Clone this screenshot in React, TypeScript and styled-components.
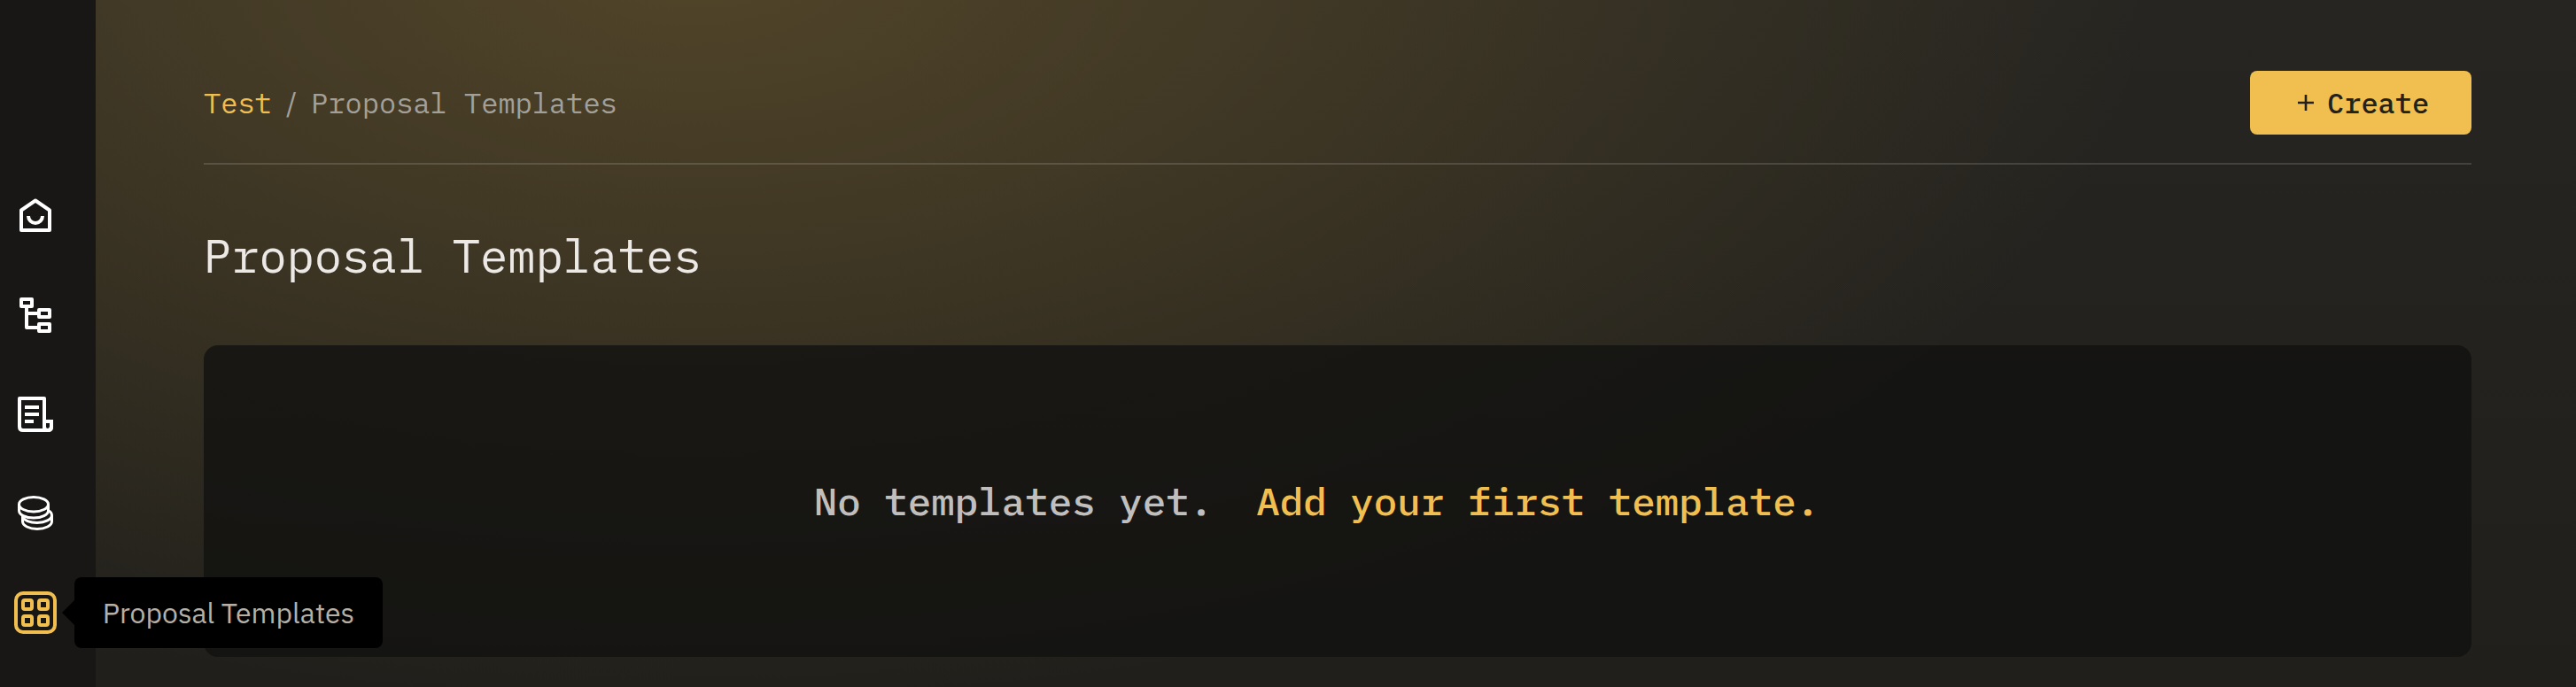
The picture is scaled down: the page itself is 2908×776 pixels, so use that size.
import React from 'react';
import styled, { createGlobalStyle } from 'styled-components';

const mono = '"IBM Plex Mono", "Liberation Mono", monospace';
const sans = '"IBM Plex Sans", Roboto, sans-serif';
const amber = '#f1bf50';

const GlobalStyle = createGlobalStyle`
  * { box-sizing: border-box; }
  body { margin: 0; background: #252420; }
`;

const Page = styled.div`
  display: flex;
  height: 776px;
  overflow: hidden;
  font-family: ${mono};
  background:
    radial-gradient(ellipse 1660px 840px at 780px -40px, rgba(241, 186, 70, 0.21) 0%, rgba(241, 186, 70, 0.137) 38%, rgba(241, 186, 70, 0.07) 68%, rgba(241, 186, 70, 0) 100%),
    linear-gradient(#262521, #201f1b);
`;

const Sidebar = styled.nav`
  width: 108px;
  flex: none;
  padding: 216px 0 0 14px;
  display: flex;
  flex-direction: column;
  gap: 60px;
  background: #181715;
`;

const NavItem = styled.a<{ $active?: boolean }>`
  position: relative;
  display: flex;
  width: 52px;
  height: 52px;
  color: ${(p) => (p.$active ? amber : '#ffffff')};
`;

const Icon = styled.svg<{ $weight?: number }>`
  width: 52px;
  height: 52px;
  fill: none;
  stroke: currentColor;
  stroke-width: ${(p) => p.$weight ?? 4};
`;

const Tooltip = styled.span`
  position: absolute;
  z-index: 2;
  left: 70px;
  top: -12px;
  width: 348px;
  height: 80px;
  display: flex;
  align-items: center;
  justify-content: center;
  border-radius: 8px;
  background: #000;
  color: #b5afa6;
  font: 400 32px/1 ${sans};
  white-space: nowrap;

  &::before {
    content: '';
    position: absolute;
    left: -14px;
    top: 26px;
    border: solid transparent;
    border-width: 14px 14px 14px 0;
    border-right-color: #000;
  }
`;

const Main = styled.main`
  flex: 1;
  padding: 48px 118px 0 122px;
`;

const Header = styled.header`
  display: flex;
  align-items: center;
  justify-content: space-between;
  height: 138px;
  border-bottom: 2px solid rgba(255, 255, 255, 0.14);
`;

const Breadcrumb = styled.div`
  display: flex;
  align-items: center;
  font-size: 32px;
  line-height: 40px;
  color: #a3a09a;
`;

const Crumb = styled.a`
  color: ${amber};
`;

const Slash = styled.span`
  width: 44.4px;
  text-align: center;
  font-family: ${sans};
`;

const CreateButton = styled.button`
  display: flex;
  align-items: center;
  gap: 15px;
  width: 250px;
  height: 72px;
  padding: 0 0 0 54px;
  border: 0;
  border-radius: 8px;
  background: ${amber};
  color: #22211d;
  font: 500 32px/40px ${mono};
`;

const PlusIcon = styled.svg`
  width: 18px;
  height: 18px;
  stroke: currentColor;
  stroke-width: 2.6;
`;

const Title = styled.h1`
  margin: 72px 0 70px;
  font-size: 52px;
  line-height: 62px;
  font-weight: 400;
  color: #ebe8e6;
`;

const EmptyCard = styled.section`
  display: flex;
  align-items: center;
  justify-content: center;
  height: 352px;
  padding-right: 47px;
  border-radius: 16px;
  background: rgba(17, 17, 16, 0.8);
  font-size: 44.16px;
  font-weight: 500;
  line-height: 56px;
  color: #c0bfbd;
  gap: 49px;
`;

const HomeIcon = () => (
  <Icon viewBox="0 0 52 52" strokeLinejoin="round">
    <path d="M10 44V21.500L26 10.500 42 21.500V44Z" />
    <path d="M18 28a8 8 0 0 0 16 0" />
  </Icon>
);

const TreeIcon = () => (
  <Icon viewBox="0 0 52 52" strokeLinejoin="round">
    <path d="M10 10h12v8H10zM30 22h12v8H30zM30 38h12v8H30zM16 18v24h14M16 26h14" />
  </Icon>
);

const InvoiceIcon = () => (
  <Icon viewBox="0 0 52 52" strokeLinejoin="round">
    <path d="M36 44V10H8v32q0 4 4 4h28q4 0 4-4" />
    <path d="M14 20h16M14 28h16M14 36h10" />
    <path strokeLinejoin="miter" d="M36 36h8v6q0 4-4 4t-4-4z" />
  </Icon>
);

const CoinsIcon = () => (
  <Icon viewBox="0 0 52 52" $weight={3}>
    <ellipse cx="24" cy="17.700" rx="16.500" ry="8.200" />
    <path d="M7.500 17.700v7c0 4.600 7.300 8.300 16.500 8.300s16.500-3.700 16.500-8.300v-7" />
    <path d="M12 32.500c2 3.500 8 5.900 16 5.900 9.100 0 16.500-3.700 16.500-8.400 0-2.200-1.500-4-4-5.500" />
    <path d="M11.500 30.500v6.500c0 4.700 7.400 8.500 16.500 8.500s16.500-3.800 16.500-8.500v-7" />
  </Icon>
);

const GridIcon = () => (
  <Icon viewBox="0 0 52 52">
    <rect x="4" y="6" width="44" height="44" rx="8" />
    <rect x="12" y="14" width="10" height="10" rx="2" />
    <rect x="30" y="14" width="10" height="10" rx="2" />
    <rect x="12" y="32" width="10" height="10" rx="2" />
    <rect x="30" y="32" width="10" height="10" rx="2" />
  </Icon>
);

export default function App() {
  return (
    <>
      <GlobalStyle />
      <Page>
        <Sidebar>
          <NavItem><HomeIcon /></NavItem>
          <NavItem><TreeIcon /></NavItem>
          <NavItem><InvoiceIcon /></NavItem>
          <NavItem><CoinsIcon /></NavItem>
          <NavItem $active>
            <GridIcon />
            <Tooltip>Proposal Templates</Tooltip>
          </NavItem>
        </Sidebar>
        <Main>
          <Header>
            <Breadcrumb>
              <Crumb>Test</Crumb>
              <Slash>/</Slash>
              <span>Proposal Templates</span>
            </Breadcrumb>
            <CreateButton>
              <PlusIcon viewBox="0 0 18 18">
                <path d="M9 0v18M0 9h18" />
              </PlusIcon>
              Create
            </CreateButton>
          </Header>
          <Title>Proposal Templates</Title>
          <EmptyCard>
            <span>No templates yet.</span>
            <Crumb>Add your first template.</Crumb>
          </EmptyCard>
        </Main>
      </Page>
    </>
  );
}
